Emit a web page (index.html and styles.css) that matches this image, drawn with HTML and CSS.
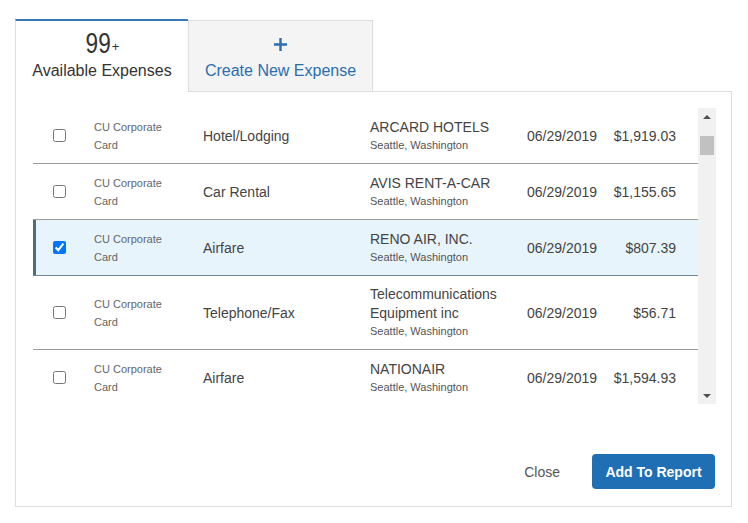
FILE: index.html
```html
<!DOCTYPE html>
<html lang="en">
<head>
    <meta charset="UTF-8">
    <meta name="viewport" content="width=device-width, initial-scale=1.0">
    <title>Add Expenses</title>
    <link rel="stylesheet" href="styles.css">
</head>
<body>
    <div class="dialog">
        <div class="tabs">
            <div class="tab active">
                <div class="count"><span class="num">99</span><span class="plus">+</span></div>
                <div class="tab-label">Available Expenses</div>
            </div>
            <div class="tab new">
                <div class="new-icon">
                    <svg width="15" height="15" viewBox="0 0 15 15"><path d="M7.5 1v13M1 7.5h13" stroke="#2a6ead" stroke-width="2.4" fill="none"/></svg>
                </div>
                <div class="tab-label">Create New Expense</div>
            </div>
            <div class="tab-fill"></div>
        </div>

        <div class="panel">
            <div class="list-wrap">
                <div class="rows">
                    <div class="row">
                        <div class="check"><input type="checkbox"></div>
                        <div class="card">CU Corporate<br>Card</div>
                        <div class="type">Hotel/Lodging</div>
                        <div class="merchant">ARCARD HOTELS<span class="loc">Seattle, Washington</span></div>
                        <div class="date">06/29/2019</div>
                        <div class="amount">$1,919.03</div>
                    </div>
                    <div class="row">
                        <div class="check"><input type="checkbox"></div>
                        <div class="card">CU Corporate<br>Card</div>
                        <div class="type">Car Rental</div>
                        <div class="merchant">AVIS RENT-A-CAR<span class="loc">Seattle, Washington</span></div>
                        <div class="date">06/29/2019</div>
                        <div class="amount">$1,155.65</div>
                    </div>
                    <div class="row selected">
                        <div class="check"><input type="checkbox" checked></div>
                        <div class="card">CU Corporate<br>Card</div>
                        <div class="type">Airfare</div>
                        <div class="merchant">RENO AIR, INC.<span class="loc">Seattle, Washington</span></div>
                        <div class="date">06/29/2019</div>
                        <div class="amount">$807.39</div>
                    </div>
                    <div class="row">
                        <div class="check"><input type="checkbox"></div>
                        <div class="card">CU Corporate<br>Card</div>
                        <div class="type">Telephone/Fax</div>
                        <div class="merchant">Telecommunications Equipment inc<span class="loc">Seattle, Washington</span></div>
                        <div class="date">06/29/2019</div>
                        <div class="amount">$56.71</div>
                    </div>
                    <div class="row last">
                        <div class="check"><input type="checkbox"></div>
                        <div class="card">CU Corporate<br>Card</div>
                        <div class="type">Airfare</div>
                        <div class="merchant">NATIONAIR<span class="loc">Seattle, Washington</span></div>
                        <div class="date">06/29/2019</div>
                        <div class="amount">$1,594.93</div>
                    </div>
                </div>
                <div class="scrollbar">
                    <div class="arrow up"></div>
                    <div class="track"><div class="thumb"></div></div>
                    <div class="arrow down"></div>
                </div>
            </div>

            <div class="footer">
                <a href="#" class="close">Close</a>
                <button type="button" class="add">Add To Report</button>
            </div>
        </div>
    </div>
</body>
</html>
```

FILE: styles.css
```css
body {
    margin: 0;
    padding: 0;
    font-family: 'Liberation Sans', Arial, sans-serif;
    background: #fff;
    color: #333;
}

.dialog {
    width: 717px;
    margin: 19px 0 0 15px;
}

/* tabs */
.tabs {
    display: flex;
    align-items: flex-start;
}

.tab {
    text-align: center;
    box-sizing: border-box;
}

.tab.active {
    width: 173px;
    height: 73px;
    padding-top: 8px;
    border-top: 2px solid #3a78b6;
    border-left: 1px solid #ddd;
    background: #fff;
}

.tab.new {
    width: 185px;
    height: 72px;
    margin-top: 1px;
    padding-top: 16px;
    background: #f4f4f4;
    border: 1px solid #ddd;
    color: #2a6ead;
}

.tab-fill {
    flex: 1;
    height: 73px;
    box-sizing: border-box;
    border-bottom: 1px solid #ddd;
}

.count {
    font-size: 29px;
    line-height: 29px;
    color: #333;
}

.count .num {
    display: inline-block;
    transform: scaleX(0.78);
    margin: 0 -3px 0 -3px;
}

.count .plus {
    font-size: 13px;
    vertical-align: 2px;
    margin-left: 1px;
}

.new-icon {
    height: 15px;
}

.new-icon svg {
    display: block;
    margin: 0 auto;
}

.tab-label {
    font-size: 16px;
    line-height: 20px;
}

.tab.new .tab-label {
    margin-top: 9px;
}

/* panel */
.panel {
    border: 1px solid #ddd;
    border-top: none;
    padding: 16px 15px 17px 17px;
}

.list-wrap {
    display: flex;
    height: 296px;
}

.rows {
    flex: 1;
}

.row {
    display: grid;
    grid-template-columns: 61px 109px 167px 157px 1fr auto;
    align-items: center;
    padding: 9px 22px 9px 0;
    min-height: 37px;
    border-bottom: 1px solid #9a9a9a;
    color: #444;
    font-size: 14px;
}

.row.last {
    border-bottom: none;
}

.row.selected {
    background: #e7f4fc;
    box-shadow: inset 3px 0 0 #4e6b84;
    border-bottom-color: #6f8597;
}

.check {
    padding-left: 20px;
    display: flex;
    align-items: center;
}

.check input {
    margin: 0;
    width: 13px;
    height: 13px;
}

.card {
    font-size: 11px;
    line-height: 18px;
    color: #666;
}

.merchant {
    line-height: 19px;
    padding-right: 20px;
}

.loc {
    display: block;
    font-size: 11px;
    line-height: 17px;
    color: #555;
}

.amount {
    text-align: right;
}

/* fake scrollbar */
.scrollbar {
    width: 18px;
    background: #f1f1f1;
    display: flex;
    flex-direction: column;
}

.arrow {
    height: 17px;
    display: flex;
    align-items: center;
    justify-content: center;
}

.arrow.up::after,
.arrow.down::after {
    content: '';
    border-left: 4px solid transparent;
    border-right: 4px solid transparent;
}

.arrow.up::after {
    border-bottom: 4px solid #505050;
}

.arrow.down::after {
    border-top: 4px solid #505050;
}

.track {
    flex: 1;
    padding: 11px 2px 0;
}

.thumb {
    height: 19px;
    background: #c1c1c1;
}

/* footer */
.footer {
    display: flex;
    justify-content: flex-end;
    align-items: center;
    gap: 32px;
    margin-top: 50px;
    padding-right: 1px;
}

.close {
    color: #555;
    text-decoration: none;
    font-size: 14px;
}

.add {
    width: 123px;
    height: 35px;
    background: #1e6fb4;
    color: #fff;
    border: none;
    border-radius: 4px;
    font-family: 'Liberation Sans', Arial, sans-serif;
    font-weight: bold;
    font-size: 14px;
    cursor: pointer;
}
```
